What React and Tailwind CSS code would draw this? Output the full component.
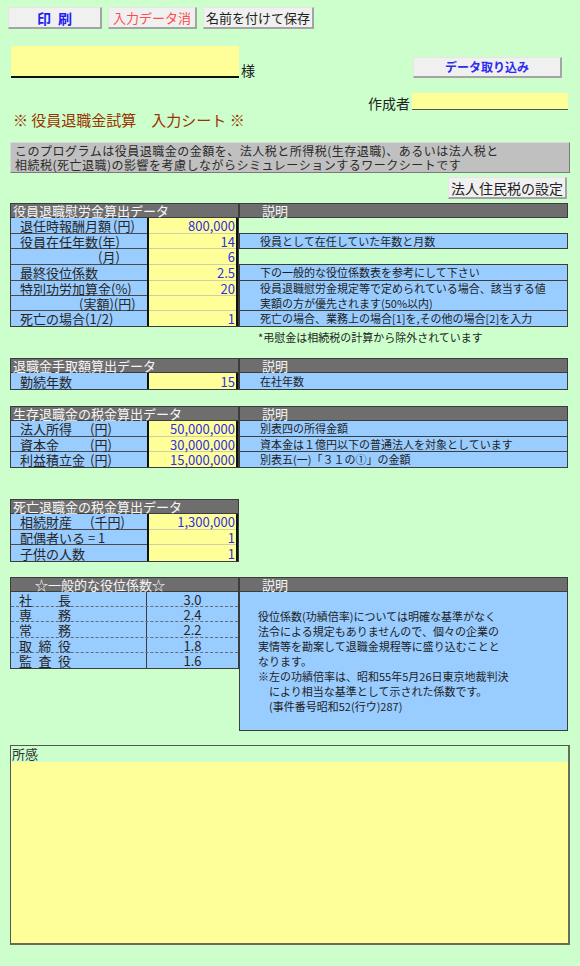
import React from 'react';

const jp = "font-['Noto_Sans_CJK_JP','Noto_Sans',sans-serif]";

function Btn({ className = '', children }) {
  return (
    <div
      className={`flex items-center justify-center bg-[#f0f0f0] border border-[#e6e6e6] border-r-2 border-b-2 border-r-[#a4a4a4] border-b-[#a4a4a4] leading-none whitespace-nowrap ${className}`}
    >
      {children}
    </div>
  );
}

function Hdr({ className = '', children }) {
  return (
    <div className={`h-[15px] bg-[#6e6e6e] border border-[#3c3c3c] text-[#f6f6f6] text-[13px] leading-[13px] whitespace-nowrap ${className}`}>
      {children}
    </div>
  );
}

// left-side input table: blue labels + yellow value column
function InputBlock({ title, rows }) {
  return (
    <div className="w-[229px] flex flex-col">
      <Hdr className="pl-[2px]">{title}</Hdr>
      <div className="flex border-x border-b border-[#3c3c3c]">
        <div className="w-[136px] flex flex-col bg-[#99ccff]">
          {rows.map((r, i) => (
            <div
              key={i}
              className={`${r.h} flex items-center text-[13px] leading-none text-[#262626] whitespace-nowrap ${i < rows.length - 1 ? 'border-b border-[#4a4a4a]' : ''} ${r.pl || 'pl-[9px]'}`}
            >
              {r.label}
            </div>
          ))}
        </div>
        <div className="flex-1 flex flex-col bg-[#ffff99] border-x-2 border-[#111]">
          {rows.map((r, i) => (
            <div
              key={i}
              className={`${r.h} flex items-center justify-end pr-[1px] text-[13px] leading-none text-[#2f2fe0] ${i < rows.length - 1 ? 'border-b border-[#cfcfa8]' : ''}`}
            >
              {r.value}
            </div>
          ))}
        </div>
      </div>
    </div>
  );
}

function Desc({ className = '', children }) {
  return (
    <div className={`bg-[#99ccff] border-x border-b border-[#3c3c3c] pl-[20px] text-[11px] text-[#1e1e1e] flex flex-col justify-center leading-[15px] whitespace-nowrap ${className}`}>
      {children}
    </div>
  );
}

function Yen({ w, label, unit = '(円)' }) {
  return (
    <span className="flex">
      <span className={w}>{label}</span>
      <span>{unit}</span>
    </span>
  );
}

const sec1 = [
  { label: <Yen w="w-[93px]" label="退任時報酬月額" />, value: '800,000', h: 'h-[16px]' },
  { label: '役員在任年数(年)', value: '14', h: 'h-[15px]' },
  { label: '(月)', value: '6', h: 'h-[16px]', pl: 'pl-[87px]' },
  { label: '最終役位係数', value: '2.5', h: 'h-[16px]' },
  { label: '特別功労加算金(%)', value: '20', h: 'h-[15px]' },
  { label: '(実額)(円)', value: '', h: 'h-[15px]', pl: 'pl-[68px]' },
  { label: '死亡の場合(1/2)', value: '1', h: 'h-[15px]' },
];

const sec2 = [{ label: '勤続年数', value: '15', h: 'h-[16px]' }];

const sec3 = [
  { label: <Yen w="w-[70px]" label="法人所得" />, value: '50,000,000', h: 'h-[16px]' },
  { label: <Yen w="w-[70px]" label="資本金" />, value: '30,000,000', h: 'h-[15px]' },
  { label: <Yen w="w-[70px]" label="利益積立金" />, value: '15,000,000', h: 'h-[15px]' },
];

const sec4 = [
  { label: <Yen w="w-[70px]" label="相続財産" unit="(千円)" />, value: '1,300,000', h: 'h-[16px]' },
  { label: '配偶者いる = 1', value: '1', h: 'h-[15px]' },
  { label: '子供の人数', value: '1', h: 'h-[16px]' },
];

const posts = [
  { c: ['社', '長'], v: '3.0', h: 'h-[15px]' },
  { c: ['専', '務'], v: '2.4', h: 'h-[15px]' },
  { c: ['常', '務'], v: '2.2', h: 'h-[16px]' },
  { c: ['取', '締', '役'], v: '1.8', h: 'h-[15px]' },
  { c: ['監', '査', '役'], v: '1.6', h: 'h-[15px]' },
];

export default function App() {
  return (
    <div className={`w-[580px] h-[966px] bg-[#ccffcc] flex flex-col ${jp}`}>
      {/* toolbar */}
      <div className="flex gap-[6px] pt-[7px] pl-[8px]">
        <Btn className="w-[94px] h-[22px] text-[14px] font-bold text-[#1f1ff0]">
          <span>印</span>
          <span className="ml-[7px]">刷</span>
        </Btn>
        <Btn className="w-[89px] h-[22px] text-[13px] text-[#ff4c4c]">入力データ消</Btn>
        <Btn className="w-[111px] h-[22px] text-[13px] text-[#222]">名前を付けて保存</Btn>
      </div>

      {/* customer name */}
      <div className="mt-[17px] pl-[11px] pr-[18px] flex items-end justify-between">
        <div className="flex items-end">
          <div className="w-[228px] h-[32px] bg-[#ffff99] border-b-2 border-[#111]" />
          <span className="ml-[2px] mb-[1px] text-[14px] leading-none text-[#222]">様</span>
        </div>
        <Btn className="w-[149px] h-[21px] text-[12px] font-bold text-[#2a2af0]">データ取り込み</Btn>
      </div>

      <div className="mt-[15px] pr-[12px] flex justify-end items-end">
        <span className="mr-[2px] text-[14px] leading-none text-[#222]">作成者</span>
        <div className="w-[156px] h-[17px] bg-[#ffff99] border-b border-[#555]" />
      </div>

      <div className="mt-[1px] ml-[13px] text-[15px] leading-[18px] text-[#993300] whitespace-pre">※ 役員退職金試算　入力シート ※</div>

      <div className="mt-[13px] mx-[10px] h-[31px] bg-[#c0c0c0] border border-[#d8d8d8] border-r-[#7a7a7a] border-b-[#7a7a7a] px-[4px] text-[12px] leading-[14px] tracking-[0.5px] text-[#2a2a2a] whitespace-nowrap flex flex-col justify-center">
        <span>このプログラムは役員退職金の金額を、法人税と所得税(生存退職)、あるいは法人税と</span>
        <span>相続税(死亡退職)の影響を考慮しながらシミュレーションするワークシートです</span>
      </div>

      <Btn className="mt-[4px] self-end mr-[13px] w-[119px] h-[22px] text-[14px] text-[#222]">法人住民税の設定</Btn>

      {/* section 1 */}
      <div className="mt-[4px] mx-[10px] flex">
        <InputBlock title="役員退職慰労金算出データ" rows={sec1} />
        <div className="w-[329px] flex flex-col">
          <Hdr className="pl-[22px]">説明</Hdr>
          <div className="h-[15px]" />
          <Desc className="h-[16px] border-t">役員として在任していた年数と月数</Desc>
          <div className="h-[15px]" />
          <Desc className="h-[17px] border-t">下の一般的な役位係数表を参考にして下さい</Desc>
          <Desc className="h-[30px]">
            <span>役員退職慰労金規定等で定められている場合、該当する値</span>
            <span>実額の方が優先されます(50%以内)</span>
          </Desc>
          <Desc className="h-[16px]">死亡の場合、業務上の場合[1]を,その他の場合[2]を入力</Desc>
        </div>
      </div>
      <div className="mt-[3px] ml-[258px] text-[11px] leading-[14px] text-[#222]">*弔慰金は相続税の計算から除外されています</div>

      {/* section 2 */}
      <div className="mt-[14px] mx-[10px] flex">
        <InputBlock title="退職金手取額算出データ" rows={sec2} />
        <div className="w-[329px] flex flex-col">
          <Hdr className="pl-[22px]">説明</Hdr>
          <Desc className="h-[17px]">在社年数</Desc>
        </div>
      </div>

      {/* section 3 */}
      <div className="mt-[16px] mx-[10px] flex">
        <InputBlock title="生存退職金の税金算出データ" rows={sec3} />
        <div className="w-[329px] flex flex-col">
          <Hdr className="pl-[22px]">説明</Hdr>
          <Desc className="h-[16px]">別表四の所得金額</Desc>
          <Desc className="h-[15px]">資本金は１億円以下の普通法人を対象としています</Desc>
          <Desc className="h-[16px]">別表五(一)「３１の①」の金額</Desc>
        </div>
      </div>

      {/* section 4 */}
      <div className="mt-[31px] mx-[10px] flex">
        <InputBlock title="死亡退職金の税金算出データ" rows={sec4} />
      </div>

      {/* section 5 */}
      <div className="mt-[15px] mx-[10px] flex items-start">
        <div className="w-[229px] flex flex-col">
          <Hdr className="pl-[24px]">☆一般的な役位係数☆</Hdr>
          <div className="flex flex-col bg-[#99ccff] border-x border-b border-[#3c3c3c]">
            {posts.map((p, i) => (
              <div key={i} className={`${p.h} flex text-[13px] leading-none text-[#262626] ${i < posts.length - 1 ? 'border-b border-dashed border-[#6a6a6a]' : ''}`}>
                <div className="w-[136px] border-r border-[#3c3c3c] pl-[8px] flex items-center">
                  <div className="w-[52px] flex justify-between">
                    {p.c.map((c, j) => (
                      <span key={j}>{c}</span>
                    ))}
                  </div>
                </div>
                <div className="flex-1 flex items-center justify-center">{p.v}</div>
              </div>
            ))}
          </div>
        </div>
        <div className="w-[329px] flex flex-col">
          <Hdr className="pl-[22px]">説明</Hdr>
          <div className="h-[139px] bg-[#99ccff] border-x border-b border-[#3c3c3c] pt-[17px] pl-[18px] text-[11px] leading-[15px] text-[#1e1e1e] whitespace-pre">
            <div>役位係数(功績倍率)については明確な基準がなく</div>
            <div>法令による規定もありませんので、個々の企業の</div>
            <div>実情等を勘案して退職金規程等に盛り込むことと</div>
            <div>なります。</div>
            <div>※左の功績倍率は、昭和55年5月26日東京地裁判決</div>
            <div>　により相当な基準として示された係数です。</div>
            <div>　(事件番号昭和52(行ウ)287)</div>
          </div>
        </div>
      </div>

      {/* remarks */}
      <div className="mt-[14px] mx-[10px] h-[200px] flex flex-col border border-[#555] border-r-2 border-b-2 border-r-[#6b6b5a] border-b-[#6b6b5a]">
        <div className="h-[16px] bg-[#ccffcc] pl-[1px] text-[13px] leading-[16px] text-[#333]">所感</div>
        <div className="flex-1 bg-[#ffff99]" />
      </div>
    </div>
  );
}
